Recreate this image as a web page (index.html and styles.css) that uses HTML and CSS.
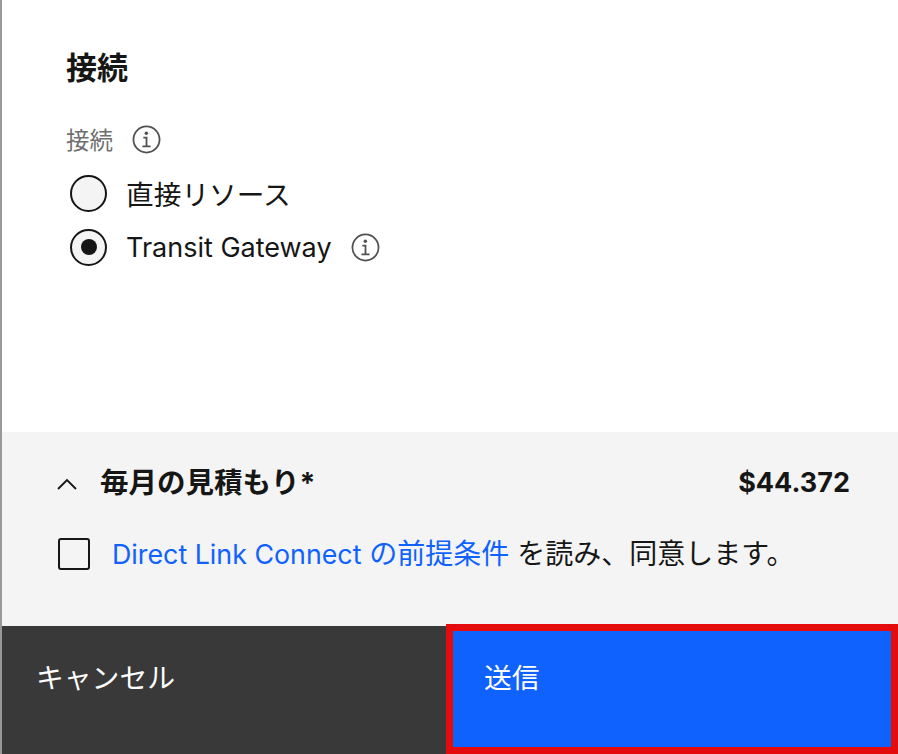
FILE: index.html
```html
<!DOCTYPE html>
<html lang="ja">
<head>
    <meta charset="UTF-8">
    <title>接続</title>
    <link rel="stylesheet" href="styles.css">
</head>
<body>
    <div class="panel">
        <section class="content">
            <h2>接続</h2>
            <div class="field-label">
                <span>接続</span>
                <svg class="info" viewBox="0 0 32 32"><circle cx="16" cy="16" r="14.4"/><path d="M11.5 23.5h9M16 23.5V14h-3.5"/><circle class="dot" cx="15.8" cy="9.2" r="1.9"/></svg>
            </div>
            <div class="radio-row cjk">
                <span class="radio"></span>
                <span>直接リソース</span>
            </div>
            <div class="radio-row">
                <span class="radio checked"></span>
                <span>Transit Gateway</span>
                <svg class="info" viewBox="0 0 32 32"><circle cx="16" cy="16" r="14.4"/><path d="M11.5 23.5h9M16 23.5V14h-3.5"/><circle class="dot" cx="15.8" cy="9.2" r="1.9"/></svg>
            </div>
        </section>
        <section class="summary">
            <div class="estimate">
                <svg class="chevron" viewBox="0 0 20 12"><path d="M1 11 10 2l9 9"/></svg>
                <strong class="estimate-title">毎月の見積もり*</strong>
                <strong class="price">$44.372</strong>
            </div>
            <div class="terms">
                <span class="checkbox"></span>
                <span class="terms-text"><a href="#"><span class="latin">Direct Link Connect</span> の前提条件</a> を読み、同意します。</span>
            </div>
        </section>
        <footer class="actions">
            <button class="btn-cancel">キャンセル</button>
            <button class="btn-submit">送信</button>
        </footer>
    </div>
</body>
</html>
```

FILE: styles.css
```css
* {
    box-sizing: border-box;
}
html, body {
    margin: 0;
    height: 754px;
    overflow: hidden;
}
body {
    font-family: "Inter", "Noto Sans CJK JP", sans-serif;
    color: #161616;
    background: white;
}
.panel {
    display: flex;
    flex-direction: column;
    height: 754px;
    border-left: 2px solid #999;
}
.content {
    height: 432px;
    padding: 46px 0 0 64px;
}
h2 {
    margin: 0 0 32px;
    font-size: 31px;
    line-height: 44px;
    font-weight: 700;
}
.field-label {
    display: flex;
    align-items: center;
    gap: 19px;
    height: 34px;
    margin-bottom: 10px;
    font-size: 23.5px;
    color: #6f6f6f;
}
.info {
    width: 29px;
    height: 29px;
    fill: none;
    stroke: #525252;
    stroke-width: 2;
}
.info .dot {
    fill: #525252;
    stroke: none;
}
.radio-row {
    display: flex;
    align-items: center;
    height: 54px;
    margin-left: 4px;
    font-size: 27px;
}
.radio-row.cjk {
    font-size: 27.7px;
}
.radio {
    flex: none;
    width: 37px;
    height: 37px;
    margin-right: 19px;
    border: 2.5px solid #161616;
    border-radius: 50%;
    background: #f4f4f4;
    display: flex;
    align-items: center;
    justify-content: center;
}
.radio.checked::after {
    content: "";
    width: 16px;
    height: 16px;
    border-radius: 50%;
    background: #161616;
}
.radio-row .info {
    margin-left: 19px;
}
.summary {
    height: 194px;
    padding: 26px 48px 0 53px;
    background: #f4f4f4;
}
.estimate {
    display: flex;
    align-items: center;
    height: 44px;
    font-size: 27px;
}
.chevron {
    width: 20px;
    height: 12px;
    margin: 8px 23px 0 2px;
    fill: none;
    stroke: #161616;
    stroke-width: 1.8;
}
.estimate-title {
    font-size: 28.5px;
    font-weight: 700;
}
.price {
    margin-left: auto;
    padding-top: 4px;
}
.terms {
    display: flex;
    align-items: center;
    gap: 22px;
    margin: 30px 0 0 3px;
    font-size: 28px;
}
.terms-text {
    padding-bottom: 4px;
}
.latin {
    font-size: 26.8px;
}
.checkbox {
    width: 32px;
    height: 32px;
    border: 2px solid #161616;
    border-radius: 3px;
}
.terms a {
    color: #0f62fe;
    text-decoration: none;
}
.actions {
    display: flex;
    flex: 1;
    background: #393939;
}
.actions button {
    border: none;
    color: white;
    font: inherit;
    font-size: 27.8px;
    text-align: left;
    display: block;
}
.btn-cancel {
    width: 444px;
    height: 128px;
    padding: 0 0 28px 34px;
    background: #393939;
}
.btn-submit {
    width: 452px;
    height: 130px;
    margin-top: -2px;
    padding: 0 0 26px 31px;
    background: #0f62fe;
    border: 7.5px solid #e30b0b !important;
}
```
